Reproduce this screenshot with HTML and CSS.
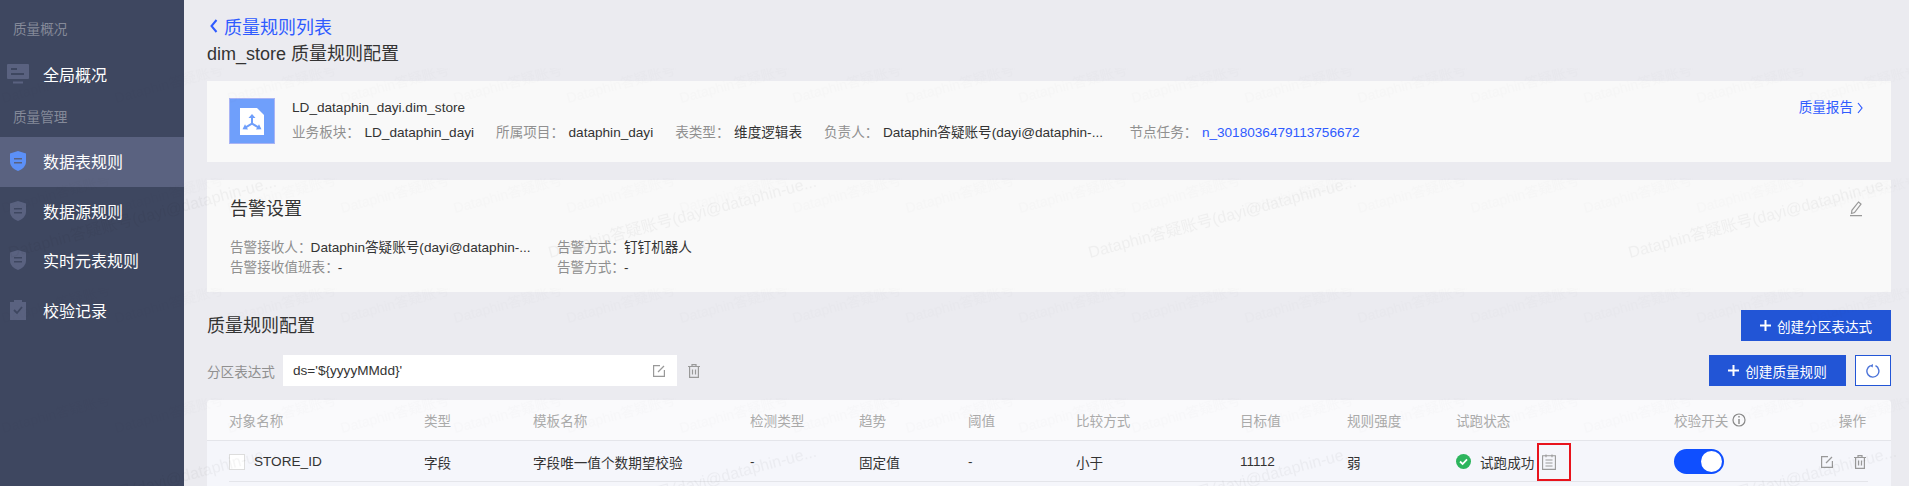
FILE: index.html
```html
<!DOCTYPE html>
<html lang="zh-CN">
<head>
<meta charset="utf-8">
<title>质量规则配置</title>
<link rel="stylesheet" href="styles.css">
</head>
<body>
<div class="app">
  <aside class="sidebar">
    <div class="nav-group">质量概况</div>
    <div class="nav-item nav-item-top">
      <svg class="nav-icon" viewBox="0 0 22 20"><path d="M1 0h20a1 1 0 0 1 1 1v13a1 1 0 0 1-1 1H1a1 1 0 0 1-1-1V1a1 1 0 0 1 1-1z" fill="#5a6280"/><path d="M4 4h6v2H4zM4 9h13v2H4z" fill="#3e4760"/><path d="M6 17.500h10V19.500H6z" fill="#5a6280"/></svg>
      <span>全局概况</span>
    </div>
    <div class="nav-group nav-group-second">质量管理</div>
    <div class="nav-item nav-item-active">
      <svg class="nav-icon" viewBox="0 0 22 20"><path d="M11 0l8 2.500v8c0 4.500-3.500 8-8 9.500-4.500-1.500-8-5-8-9.500v-8z" fill="#5c90f7"/><path d="M7 7h8v1.600H7zM7 11h8v1.600H7z" fill="#5a6280"/></svg>
      <span>数据表规则</span>
    </div>
    <div class="nav-item">
      <svg class="nav-icon" viewBox="0 0 22 20"><path d="M11 0l8 2.500v8c0 4.500-3.500 8-8 9.500-4.500-1.500-8-5-8-9.500v-8z" fill="#5a6280"/><path d="M7 7h8v1.600H7zM7 11h8v1.600H7z" fill="#3e4760"/></svg>
      <span>数据源规则</span>
    </div>
    <div class="nav-item nav-item-short">
      <svg class="nav-icon" viewBox="0 0 22 20"><path d="M11 0l8 2.500v8c0 4.500-3.500 8-8 9.500-4.500-1.500-8-5-8-9.500v-8z" fill="#5a6280"/><path d="M7 7h8v1.600H7zM7 11h8v1.600H7z" fill="#3e4760"/></svg>
      <span>实时元表规则</span>
    </div>
    <div class="nav-item">
      <svg class="nav-icon" viewBox="0 0 22 20"><path d="M3 2h4V0h8v2h4v18H3z" fill="#5a6280"/><path d="M7 10l3 3 5-6" fill="none" stroke="#3e4760" stroke-width="1.800"/></svg>
      <span>校验记录</span>
    </div>
  </aside>

  <main class="main">
    <a class="back-link">
      <svg class="back-chevron" viewBox="0 0 8 14"><path d="M6.500 1L1.500 7l5 6" fill="none" stroke="#2f5bff" stroke-width="2"/></svg>
      <span>质量规则列表</span>
    </a>
    <h1 class="page-title">dim_store 质量规则配置</h1>

    <section class="card card-info">
      <svg class="table-icon" viewBox="0 0 46 46">
        <rect x="0.500" y="0.500" width="45" height="45" fill="#6f9ffb" stroke="#a9b4f5"/>
        <path d="M11 10h17l7 7v20H11z" fill="#fff"/>
        <path d="M23 16l3.500 4H24v5l5 3 1-1.700 2.500 5-5.500.2 1-1.700-5-3-5 3 1 1.700-5.500-.2 2.500-5 1 1.700 5-3v-5h-2.500z" fill="#6f9ffb"/>
      </svg>
      <div class="info-body">
        <div class="info-name">LD_dataphin_dayi.dim_store</div>
        <div class="info-meta">
          <span class="meta-label">业务板块：</span><span class="meta-value">LD_dataphin_dayi</span>
          <span class="meta-label">所属项目：</span><span class="meta-value">dataphin_dayi</span>
          <span class="meta-label">表类型：</span><span class="meta-value">维度逻辑表</span>
          <span class="meta-label">负责人：</span><span class="meta-value meta-value-wide">Dataphin答疑账号(dayi@dataphin-...</span>
          <span class="meta-label">节点任务：</span><span class="meta-value meta-link">n_3018036479113756672</span>
        </div>
      </div>
      <a class="report-link">质量报告<svg class="report-chevron" viewBox="0 0 6 12"><path d="M1 1l4 5-4 5" fill="none" stroke="#2f5bff" stroke-width="1.200"/></svg></a>
    </section>

    <section class="card card-alarm">
      <div class="alarm-head">
        <h2 class="section-title">告警设置</h2>
        <svg class="pencil" viewBox="0 0 14 16"><path d="M9.500 1l2.500 2-6.500 8.500-3 1 .4-3.200zM1 14.700h12" fill="none" stroke="#999" stroke-width="1.200"/></svg>
      </div>
      <div class="alarm-grid">
        <div><span class="alarm-label">告警接收人：</span><span class="alarm-value">Dataphin答疑账号(dayi@dataphin-...</span></div>
        <div><span class="alarm-label">告警方式：</span><span class="alarm-value">钉钉机器人</span></div>
        <div><span class="alarm-label">告警接收值班表：</span><span class="alarm-value">-</span></div>
        <div><span class="alarm-label">告警方式：</span><span class="alarm-value">-</span></div>
      </div>
    </section>

    <div class="rule-head">
      <h2 class="section-title">质量规则配置</h2>
      <button class="btn btn-partition"><svg class="plus" viewBox="0 0 11 11"><path d="M4.500 0h2v4.500H11v2H6.500V11h-2V6.500H0v-2h4.500z" fill="#fff"/></svg>创建分区表达式</button>
    </div>

    <div class="expr-row">
      <span class="expr-label">分区表达式</span>
      <div class="expr-input">
        <span>ds='${yyyyMMdd}'</span>
        <svg class="icon-edit" viewBox="0 0 12 12"><path d="M7 .6H.6v10.800h10.800V5" fill="none" stroke="#999" stroke-width="1.200"/><path d="M11 1L5 7" stroke="#999" stroke-width="1.200"/></svg>
      </div>
      <svg class="icon-trash" viewBox="0 0 12 14"><path d="M0 2.500h12M4 2.500V.6h4v1.900M1.600 2.500v10.900h8.800V2.500M4.500 5.500v5M7.500 5.500v5" fill="none" stroke="#999" stroke-width="1.200"/></svg>
      <div class="expr-actions">
        <button class="btn btn-rule"><svg class="plus" viewBox="0 0 11 11"><path d="M4.500 0h2v4.500H11v2H6.500V11h-2V6.500H0v-2h4.500z" fill="#fff"/></svg>创建质量规则</button>
        <button class="btn-refresh" aria-label="刷新"><svg class="icon-refresh" viewBox="0 0 14 14"><path d="M9.500 1.700A6 6 0 1 1 4.500 1.600" fill="none" stroke="#4a72d8" stroke-width="1.400"/><path d="M7 0L3.800 1.700 6.700 3.600z" fill="#4a72d8"/></svg></button>
      </div>
    </div>

    <section class="rule-table">
      <div class="tr tr-head">
        <div>对象名称</div><div>类型</div><div>模板名称</div><div>检测类型</div><div>趋势</div><div>阈值</div><div>比较方式</div><div>目标值</div><div>规则强度</div><div>试跑状态</div>
        <div class="cell-flex">校验开关<svg class="icon-info" viewBox="0 0 14 14"><circle cx="7" cy="7" r="6" fill="none" stroke="#888" stroke-width="1.200"/><path d="M6.300 3h1.400v1.500H6.300zM6.300 6h1.400v5H6.300z" fill="#888"/></svg></div>
        <div class="cell-end">操作</div>
      </div>
      <div class="tr tr-body">
        <div class="cell-flex"><span class="checkbox"></span>STORE_ID</div><div>字段</div><div>字段唯一值个数期望校验</div><div>-</div><div>固定值</div><div>-</div><div>小于</div><div>11112</div><div>弱</div>
        <div class="cell-flex">
          <svg class="icon-ok" viewBox="0 0 15 15"><circle cx="7.500" cy="7.500" r="7.500" fill="#2db55d"/><path d="M4 7.500l2.600 2.500L11 5.400" fill="none" stroke="#fff" stroke-width="1.800"/></svg>
          <span class="run-status">试跑成功</span>
          <span class="doc-box"><svg class="icon-doc" viewBox="0 0 14 16"><path d="M.6 1.800h12.800v13.600H.6zM4 .4v2.800M10 .4v2.800M3.500 6h7M3.500 9h7M3.500 12h7" fill="none" stroke="#999" stroke-width="1.100"/></svg></span>
        </div>
        <div><span class="switch"><span class="switch-knob"></span></span></div>
        <div class="cell-end cell-actions">
          <svg class="icon-edit" viewBox="0 0 12 12"><path d="M7 .6H.6v10.800h10.800V5" fill="none" stroke="#999" stroke-width="1.200"/><path d="M11 1L5 7" stroke="#999" stroke-width="1.200"/></svg>
          <svg class="icon-trash" viewBox="0 0 12 14"><path d="M0 2.500h12M4 2.500V.6h4v1.900M1.600 2.500v10.900h8.800V2.500M4.500 5.500v5M7.500 5.500v5" fill="none" stroke="#999" stroke-width="1.200"/></svg>
        </div>
      </div>
    </section>
  </main>

  <svg class="watermark" aria-hidden="true">
    <defs>
      <pattern id="wm-small" patternUnits="userSpaceOnUse" x="-2" y="68" width="113" height="110">
        <text class="wm-small-text" transform="translate(5 35) rotate(-15)">Dataphin答疑账号(dayi@dataphin-ue</text>
      </pattern>
      <pattern id="wm-large" patternUnits="userSpaceOnUse" x="0" y="0" width="540" height="270">
        <text class="wm-large-text" transform="translate(10 258) rotate(-15)">Dataphin答疑账号(dayi@dataphin-ue...</text>
      </pattern>
    </defs>
    <rect class="wm-fill-small" width="1909" height="486"/>
    <rect class="wm-fill-large" width="1909" height="486"/>
  </svg>
</div>
</body>
</html>
```
FILE: styles.css
```css
* { box-sizing: border-box; }
html, body { margin: 0; height: 100%; overflow: hidden; }
body {
  font-family: "Liberation Sans", "Noto Sans CJK SC", sans-serif;
  font-size: 13.6px;
  color: #333;
  background: #ebebf0;
}
.app { position: relative; display: flex; height: 100vh; overflow: hidden; }

/* sidebar */
.sidebar { flex: 0 0 184px; padding-top: 11px; background: #3e4760; color: #fff; }
.nav-group { height: 38px; line-height: 38px; padding-left: 13px; color: #858a99; font-size: 13.6px; }
.nav-item { display: flex; align-items: center; height: 50px; padding: 0 0 2px 7px; font-size: 16px; gap: 14px; }
.nav-item-top { padding-bottom: 0; }
.nav-item-short { height: 49px; padding-bottom: 4px; }
.nav-item-active { background: #5a6280; }
.nav-icon { width: 22px; height: 20px; flex: none; }

/* main */
.main { flex: 1; display: flex; flex-direction: column; min-width: 0; padding: 14px 18px 0 23px; }
.back-link { display: flex; align-items: center; gap: 6px; height: 24px; margin-left: 3px; font-size: 18px; color: #2f5bff; }
.back-chevron { width: 8px; height: 14px; }
.page-title { margin: 4px 0 15px; height: 24px; line-height: 24px; font-size: 18px; font-weight: 400; color: #333; }
.section-title { margin: 0; font-size: 18px; font-weight: 400; color: #333; line-height: 26px; }

.card { background: #f9f9f9; }
.card-info { display: flex; height: 81px; padding: 17px 28px 0 22px; }
.table-icon { width: 46px; height: 46px; flex: none; }
.info-body { flex: 1; margin-left: 17px; }
.info-name { height: 20px; line-height: 20px; color: #333; }
.info-meta { display: flex; margin-top: 5px; height: 20px; line-height: 20px; white-space: nowrap; }
.meta-label { color: #909090; margin-right: 4.500px; }
.meta-value { color: #333; margin-right: 22px; }
.meta-value-wide { width: 221px; margin-right: 25.500px; }
.meta-link { color: #2f5bff; }
.report-link { display: flex; align-items: flex-start; gap: 4px; height: 20px; line-height: 20px; color: #2f5bff; }
.report-chevron { width: 6px; height: 12px; margin-top: 4px; }

.card-alarm { margin-top: 18px; height: 112px; padding: 16px 28px 0 23px; }
.alarm-head { display: flex; justify-content: space-between; align-items: center; }
.pencil { width: 14px; height: 16px; }
.alarm-grid { display: grid; grid-template-columns: 327px auto; margin-top: 16px; line-height: 20px; white-space: nowrap; }
.alarm-label { color: #909090; margin-right: -1px; }
.alarm-value { color: #333; }

.rule-head { display: flex; justify-content: space-between; align-items: center; margin-top: 18px; height: 31px; }
.btn {
  display: flex; align-items: center; justify-content: center; gap: 6px;
  height: 31px; border: 0; padding: 0; color: #fff; background: #2255d6;
  font: inherit;
}
.btn-partition { width: 150px; }
.btn-rule { width: 137px; }
.plus { width: 11px; height: 11px; }
.expr-row { display: flex; align-items: center; margin-top: 14px; height: 31px; }
.expr-label { width: 76px; color: #909090; }
.expr-input { display: flex; align-items: center; justify-content: space-between; width: 394px; height: 31px; padding: 0 12px 0 10px; background: #fff; color: #333; }
.icon-edit { width: 12px; height: 12px; }
.icon-trash { width: 12px; height: 14px; }
.expr-row > .icon-trash { margin-left: 11px; }
.expr-actions { display: flex; gap: 9px; margin-left: auto; }
.btn-refresh { display: flex; align-items: center; justify-content: center; width: 36px; height: 31px; padding: 0; background: #fff; border: 1px solid #2255d6; }
.icon-refresh { width: 14px; height: 14px; }

/* table */
.rule-table { flex: 1; margin-top: 14px; background: #f5f6fb; border-radius: 4px 4px 0 0; }
.tr {
  display: grid;
  grid-template-columns: 195px 109px 217px 109px 109px 108px 164px 107px 109px 218px 120px 1fr;
  align-items: center;
  padding: 0 25px 0 22px;
  white-space: nowrap;
}
.tr-head { height: 41px; background: #fafafc; color: #aaa; border-bottom: 1px solid #e4e5ea; border-radius: 4px 4px 0 0; }
.tr-body { position: relative; height: 41px; color: #333; }
.tr-body::after { content: ""; position: absolute; left: 22px; right: 23px; bottom: 0; height: 1px; background: #e4e5ea; }
.cell-flex { display: flex; align-items: center; }
.cell-end { display: flex; justify-content: flex-end; align-items: center; }
.cell-actions { gap: 21px; }
.checkbox { width: 16px; height: 16px; margin-right: 9px; background: #fff; border: 1px solid #ddd; }
.icon-info { width: 14px; height: 14px; margin-left: 4px; }
.icon-ok { width: 15px; height: 15px; flex: none; margin-right: 9px; }
.run-status { color: #333; }
.doc-box { display: flex; align-items: center; width: 34px; height: 38px; margin-left: 3px; padding-left: 3px; border: 2px solid #e8131c; }
.icon-doc { width: 14px; height: 16px; }
.switch { display: block; width: 50px; height: 25px; border-radius: 13px; background: #0f4fff; position: relative; }
.switch-knob { position: absolute; right: 2px; top: 2px; width: 21px; height: 21px; border-radius: 50%; background: #fff; }

/* watermark */
.watermark { position: absolute; left: 0; top: 0; width: 100%; height: 100%; pointer-events: none; }
.wm-fill-small { fill: url(#wm-small); }
.wm-fill-large { fill: url(#wm-large); }
.wm-small-text { font-family: "Liberation Sans", "Noto Sans CJK SC", sans-serif; font-size: 14px; fill: #000; fill-opacity: 0.012; }
.wm-large-text { font-family: "Liberation Sans", "Noto Sans CJK SC", sans-serif; font-size: 16px; fill: #000; fill-opacity: 0.04; }
```
